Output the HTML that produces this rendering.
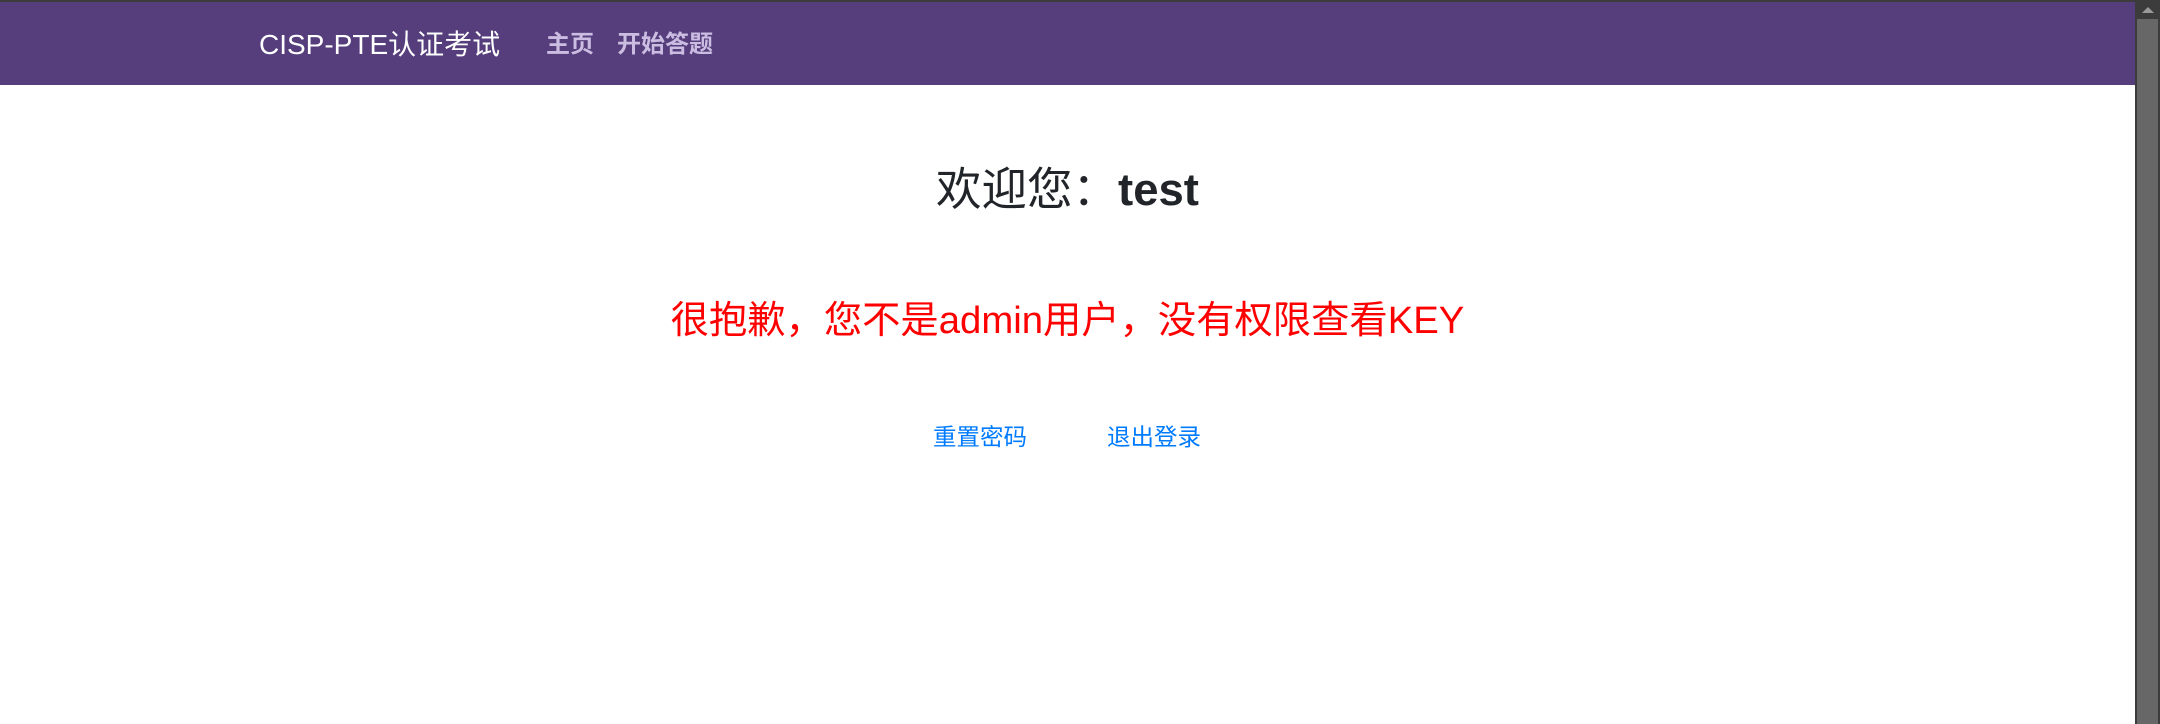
<!DOCTYPE html>
<html><head><meta charset="utf-8"><style>
*{margin:0;padding:0;box-sizing:border-box}
html,body{width:2160px;height:724px;overflow:hidden;background:#fff;font-family:"Liberation Sans","Noto Sans CJK SC",sans-serif}
.nav{position:absolute;left:0;top:0;width:2135px;height:85px;background:#563d7c;border-top:2px solid #3c3c3c}
.t{position:absolute;white-space:nowrap;line-height:1}
.sb{position:absolute;left:2135px;top:0;width:25px;height:724px;background:#3c3c3c}
.th{position:absolute;left:2137px;top:19px;width:21px;height:705px;background:#676767}
.arr{position:absolute;left:2142px;top:7px;width:0;height:0;border-left:6px solid transparent;border-right:6px solid transparent;border-bottom:6px solid #9a9a9a}
.c{position:absolute;left:0;width:2135px;text-align:center;white-space:nowrap;line-height:1}
</style></head><body>
<div class="nav"></div>
<div class="t" style="left:259px;top:31px;font-size:28px;color:#fff">CISP-PTE认证考试</div>
<div class="t" style="left:546px;top:33px;font-size:24px;color:#cbbde2;font-weight:bold">主页</div>
<div class="t" style="left:617px;top:33px;font-size:24px;color:#cbbde2;font-weight:bold">开始答题</div>
<div class="c" style="top:167px;font-size:45.5px;color:#212529">欢迎您：<b>test</b></div>
<div class="c" style="top:302px;font-size:38.3px;color:#ff0000">很抱歉，您不是admin用户，没有权限查看KEY</div>
<div class="t" style="left:933px;top:426px;font-size:23.5px;color:#007bff">重置密码</div>
<div class="t" style="left:1107px;top:426px;font-size:23.5px;color:#007bff">退出登录</div>
<div class="sb"></div><div class="th"></div><div class="arr"></div>
</body></html>
